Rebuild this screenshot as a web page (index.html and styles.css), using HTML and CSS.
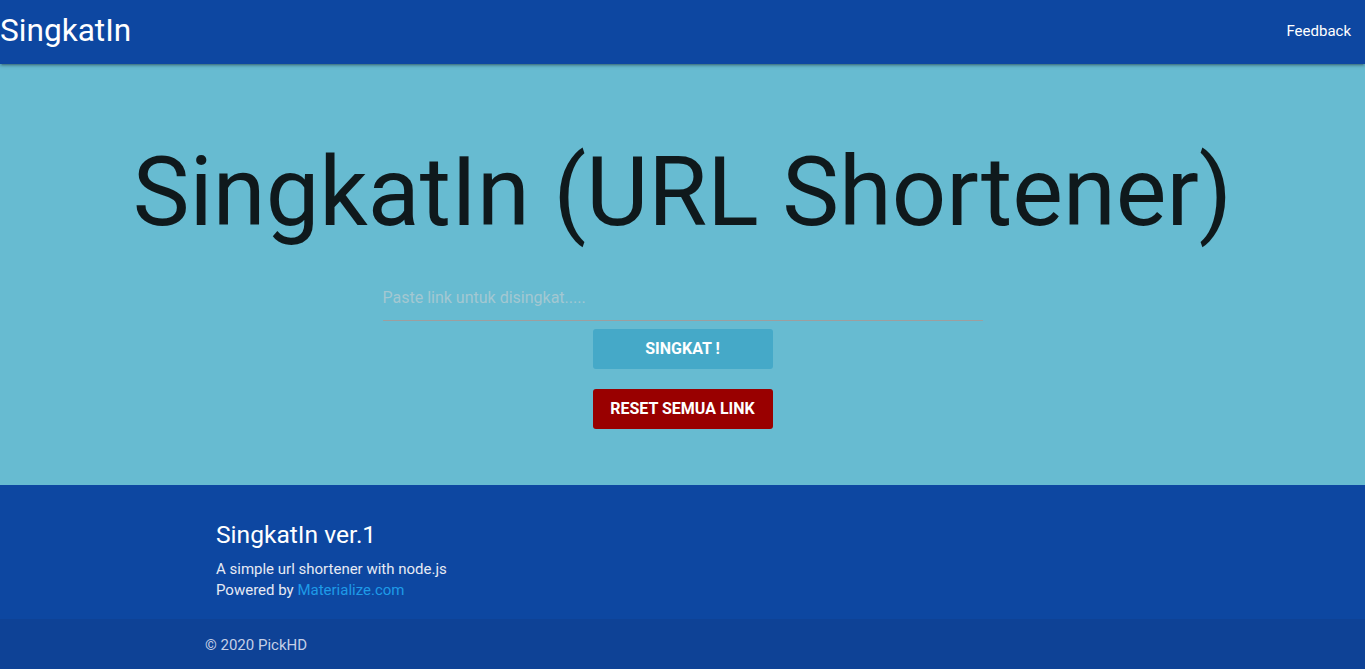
FILE: index.html
```html
<!DOCTYPE html>
<html lang="id">
<head>
<meta charset="utf-8">
<title>SingkatIn</title>
<link rel="stylesheet" href="styles.css">
</head>
<body>
<nav class="navbar">
  <a class="brand" href="#">SingkatIn</a>
  <a class="nav-link" href="#">Feedback</a>
</nav>
<main class="hero">
  <h1 class="title">SingkatIn (URL Shortener)</h1>
  <form class="form">
    <input class="url-input" type="text" placeholder="Paste link untuk disingkat.....">
    <button class="btn btn-primary" type="button">SINGKAT !</button>
    <button class="btn btn-danger" type="button">RESET SEMUA LINK</button>
  </form>
</main>
<footer class="footer">
  <div class="footer-main">
    <h5 class="footer-title">SingkatIn ver.1</h5>
    <p class="footer-text">A simple url shortener with node.js<br>Powered by <a class="footer-link" href="#">Materialize.com</a></p>
  </div>
  <div class="footer-copy">
    <span class="copy-inner">© 2020 PickHD</span>
  </div>
</footer>
</body>
</html>
```

FILE: styles.css
```css
* { box-sizing: border-box; }
html, body { margin: 0; padding: 0; }
body {
  font-family: Roboto, "Liberation Sans", sans-serif;
  background: #0d47a1;
  color: #fff;
}
a { text-decoration: none; }

.navbar {
  height: 64px;
  background: #0d47a1;
  display: flex;
  align-items: flex-start;
  justify-content: space-between;
  box-shadow: 0 2px 2px 0 rgba(0,0,0,0.14), 0 3px 1px -2px rgba(0,0,0,0.12), 0 1px 5px 0 rgba(0,0,0,0.2);
  position: relative;
  z-index: 2;
}
.brand {
  color: #fff;
  font-size: 31.6px;
  line-height: 62px;
}
.nav-link {
  color: #fff;
  font-size: 15px;
  padding: 0 14px 0 15px;
  line-height: 62px;
}

.hero {
  background: #67bbd1;
  height: 421px;
  display: flex;
  flex-direction: column;
  align-items: center;
  padding-top: 73px;
}
.title {
  margin: 0;
  font-size: 95.6px;
  font-weight: 400;
  line-height: 110px;
  color: #0f191c;
  letter-spacing: 0;
}
.form {
  display: flex;
  flex-direction: column;
  align-items: center;
  margin-top: 31px;
}
.url-input {
  width: 600px;
  height: 43px;
  border: none;
  border-bottom: 1px solid #9e9e9e;
  background: transparent;
  font-family: Roboto, "Liberation Sans", sans-serif;
  font-size: 16px;
  padding: 0 0 4px;
  outline: none;
  color: #000;
}
.url-input::placeholder { color: #a3c8d2; }
.btn {
  width: 180px;
  height: 40px;
  border: none;
  border-radius: 3px;
  font-family: Roboto, "Liberation Sans", sans-serif;
  font-weight: 700;
  font-size: 16px;
  color: #fff;
  letter-spacing: 0;
  padding: 0 0 2px;
}
.btn-primary { background: #45a9c8; margin-top: 8px; }
.btn-danger { background: #990000; margin-top: 20px; }

.footer { background: #0d47a1; }
.footer-main {
  height: 134px;
  padding: 37px 0 0 216px;
}
.footer-title {
  margin: 0;
  font-size: 24.6px;
  font-weight: 400;
  line-height: 25px;
  color: #fff;
}
.footer-text {
  margin: 12px 0 0;
  font-size: 15px;
  line-height: 21px;
  color: #e6eaf4;
}
.footer-link { color: #1e9be8; }
.footer-copy {
  height: 50px;
  background: #0e4296;
  padding-left: 205px;
  display: flex;
  align-items: center;
}
.copy-inner {
  font-size: 15px;
  color: #c5d0e6;
  margin-top: 2px;
}
```
